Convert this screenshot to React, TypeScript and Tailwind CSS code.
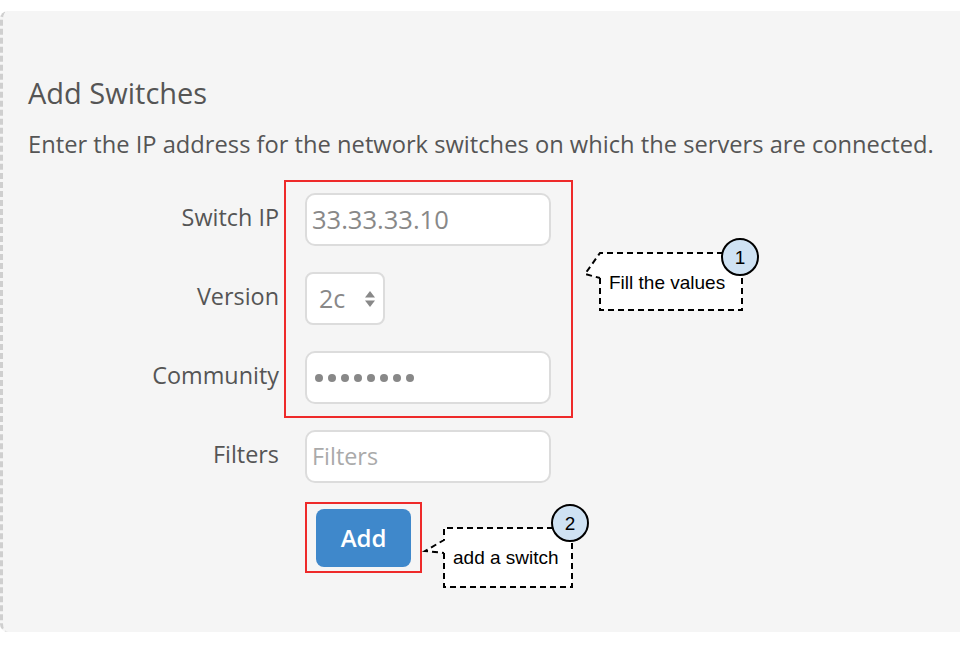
import React from "react";

const font = { fontFamily: '"Open Sans", "Noto Sans", sans-serif' };

export default function App() {
  return (
    <div className="w-[960px] h-[648px] bg-white overflow-hidden" style={font}>
      <div className="relative mt-[11px] h-[621px] bg-[#f5f5f5] border-l-[3px] border-dashed border-[#cfcfcf] rounded-l-[8px] pl-[25px] pt-[64px]">
        <h2 className="text-[29px] leading-[36px] text-[#555]">Add Switches</h2>
        <p className="mt-[19px] text-[23.7px] leading-[28px] text-[#555] whitespace-nowrap">
          Enter the IP address for the network switches on which the servers are connected.
        </p>
        <div className="mt-[35px] grid grid-cols-[251px_246px] gap-x-[26px] gap-y-[26px] auto-rows-[53px] items-center">
          <label className="text-right text-[23.4px] text-[#555] -mt-[4px]">Switch IP</label>
          <div className="h-[53px] rounded-[10px] border-2 border-[#dcdcdc] bg-white flex items-center px-[5px] text-[25.5px] text-[#888]">
            33.33.33.10
          </div>
          <label className="text-right text-[23.4px] text-[#555] -mt-[4px]">Version</label>
          <div className="h-[53px] w-[80px] rounded-[8px] border-2 border-[#dcdcdc] bg-white flex items-center pl-[12px] pr-[7px] text-[25px] text-[#888] justify-between">
            <span>2c</span>
            <svg width="12" height="20" viewBox="0 0 12 20">
              <path d="M6 2 L11 8.5 L1 8.5 Z" fill="#888" />
              <path d="M6 18 L11 11.5 L1 11.5 Z" fill="#888" />
            </svg>
          </div>
          <label className="text-right text-[23.4px] text-[#555] -mt-[4px]">Community</label>
          <div className="h-[53px] rounded-[10px] border-2 border-[#dcdcdc] bg-white flex items-center pl-[8px] gap-[5px]">
            {Array.from({ length: 8 }).map((_, i) => (
              <span key={i} className="w-[8px] h-[8px] rounded-full bg-[#888] inline-block" />
            ))}
          </div>
          <label className="text-right text-[23.4px] text-[#555] -mt-[4px]">Filters</label>
          <div className="h-[53px] rounded-[10px] border-2 border-[#dcdcdc] bg-white flex items-center px-[5px] text-[23.4px] text-[#aaa]">
            Filters
          </div>
          <div />
          <div className="pl-[11px] pt-[4px] flex items-center">
            <button className="w-[95px] h-[58px] rounded-[8px] bg-[#3f88cb] text-white text-[24px] font-semibold">
              Add
            </button>
          </div>
        </div>

        {/* red highlight boxes */}
        <div className="absolute left-[281px] top-[169px] w-[289px] h-[238px] border-2 border-[#ee2a2a]" />
        <div className="absolute left-[302px] top-[491px] w-[117px] h-[71px] border-2 border-[#ee2a2a]" />

        {/* callout 1 */}
        <svg className="absolute left-[567px] top-[225px]" width="200" height="100" viewBox="570 236 200 100">
          <path
            d="M600 278 V310 H742 V253 H600 L585 274 L600 278"
            fill="white"
            stroke="black"
            strokeWidth="2"
            strokeDasharray="6 4"
          />
          <circle cx="740" cy="257" r="18" fill="#cfe2f3" stroke="black" strokeWidth="2" />
          <text x="740" y="264" textAnchor="middle" fontSize="19" fontFamily="Liberation Sans, Arial, sans-serif">1</text>
          <text x="609" y="289" fontSize="19" fontFamily="Liberation Sans, Arial, sans-serif">Fill the values</text>
        </svg>

        {/* callout 2 */}
        <svg className="absolute left-[414px] top-[484px]" width="180" height="110" viewBox="417 495 180 110">
          <path
            d="M444 553 V587 H572 V528 H444 V540 L425 551 L444 553"
            fill="white"
            stroke="black"
            strokeWidth="2"
            strokeDasharray="6 4"
          />
          <circle cx="570" cy="523" r="18" fill="#cfe2f3" stroke="black" strokeWidth="2" />
          <text x="570" y="530" textAnchor="middle" fontSize="19" fontFamily="Liberation Sans, Arial, sans-serif">2</text>
          <text x="453" y="564" fontSize="19" fontFamily="Liberation Sans, Arial, sans-serif">add a switch</text>
        </svg>
      </div>
    </div>
  );
}
